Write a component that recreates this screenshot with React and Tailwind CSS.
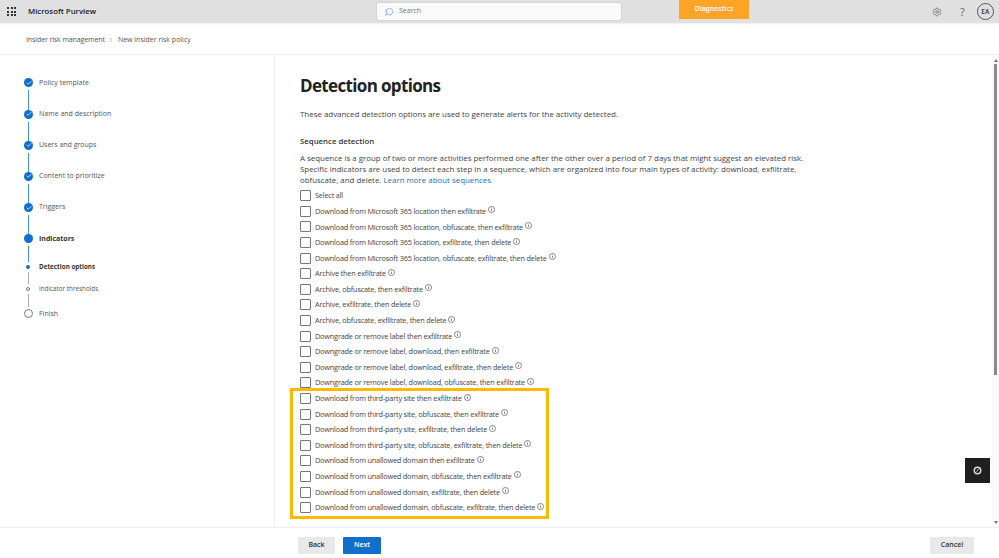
import { Check, ChevronRight, Search, Settings } from "lucide-react";

const steps = [
  { label: "Policy template", done: true },
  { label: "Name and description", done: true },
  { label: "Users and groups", done: true },
  { label: "Content to prioritize", done: true },
  { label: "Triggers", done: true },
];

const rows = [
  "Download from Microsoft 365 location then exfiltrate",
  "Download from Microsoft 365 location, obfuscate, then exfiltrate",
  "Download from Microsoft 365 location, exfiltrate, then delete",
  "Download from Microsoft 365 location, obfuscate, exfiltrate, then delete",
  "Archive then exfiltrate",
  "Archive, obfuscate, then exfiltrate",
  "Archive, exfiltrate, then delete",
  "Archive, obfuscate, exfiltrate, then delete",
  "Downgrade or remove label then exfiltrate",
  "Downgrade or remove label, download, then exfiltrate",
  "Downgrade or remove label, download, exfiltrate, then delete",
  "Downgrade or remove label, download, obfuscate, then exfiltrate",
  "Download from third-party site then exfiltrate",
  "Download from third-party site, obfuscate, then exfiltrate",
  "Download from third-party site, exfiltrate, then delete",
  "Download from third-party site, obfuscate, exfiltrate, then delete",
  "Download from unallowed domain then exfiltrate",
  "Download from unallowed domain, obfuscate, then exfiltrate",
  "Download from unallowed domain, exfiltrate, then delete",
  "Download from unallowed domain, obfuscate, exfiltrate, then delete",
];

function InfoIcon() {
  return (
    <svg width="7" height="7" viewBox="0 0 8 8" className="ml-[2px] -mt-[3px] shrink-0 text-[#444]" fill="none" stroke="currentColor" strokeWidth="0.7">
      <circle cx="4" cy="4" r="3.5" />
      <path d="M4 3.4v2.4M4 2v.8" />
    </svg>
  );
}

function CheckRow({ label, info = true }) {
  return (
    <div className="flex h-[15.6px] items-center">
      <div className="h-[11px] w-[11px] shrink-0 rounded-[1px] border border-[#777] bg-white" />
      <span className="ml-[4px] whitespace-nowrap text-[7.3px] tracking-[-0.18px] text-[#444]">{label}</span>
      {info && <InfoIcon />}
    </div>
  );
}

function Line({ h, color = "bg-[#3f94e4]" }) {
  return <div className={`ml-[28px] w-[1px] ${h} ${color}`} />;
}

export default function App() {
  return (
    <div className="flex h-[558px] w-[999px] flex-col overflow-hidden bg-white font-['Open_Sans','Noto_Sans',sans-serif] text-[#323130]">
      {/* top bar */}
      <header className="flex h-[23px] shrink-0 items-center bg-[#e0e0e0] shadow-[0_1px_2px_rgba(0,0,0,0.08)]">
        <div className="ml-[7px] grid w-[9px] grid-cols-3 gap-[1.5px]">
          {Array.from({ length: 9 }).map((_, i) => (
            <div key={i} className="h-[2px] w-[2px] bg-[#333]" />
          ))}
        </div>
        <span className="ml-[12px] w-[349px] text-[7.8px] font-semibold text-[#222]">Microsoft Purview</span>
        <div className="flex h-[17px] w-[244px] items-center rounded-[2px] bg-[#fafafa] pl-[7px] shadow-[0_0_2px_rgba(0,0,0,0.2)]">
          <Search size={10} strokeWidth={1.5} className="-scale-x-100 text-[#5b9bd5]" />
          <span className="ml-[5px] text-[7px] text-[#777]">Search</span>
        </div>
        <div className="ml-[58px] flex h-[19px] w-[70px] items-center justify-center self-start bg-[#ffa424] text-[7px] font-semibold text-white">
          Diagnostics
        </div>
        <Settings size={10} strokeWidth={2} className="ml-[183px] text-[#777]" />
        <span className="ml-[18px] text-[11px] leading-none text-[#666]">?</span>
        <div className="ml-[12px] flex h-[17px] w-[17px] items-center justify-center rounded-full border border-[#555] text-[6.5px] font-semibold text-[#333]">
          EA
        </div>
      </header>

      {/* breadcrumb */}
      <div className="flex h-[32px] shrink-0 items-center border-b border-[#eee] pl-[26px] pt-[3px] text-[7px] text-[#555]">
        <span className="tracking-[-0.1px]">Insider risk management</span>
        <ChevronRight size={8} strokeWidth={1.5} className="mx-[2px] text-[#888]" />
        <span className="ml-[1px]">New insider risk policy</span>
      </div>

      <div className="flex min-h-0 flex-1">
        {/* wizard steps */}
        <aside className="w-[275px] shrink-0 border-r border-[#eee] pt-[23.4px]">
          {steps.map((s) => (
            <div key={s.label}>
              <div className="flex h-[9px] items-center pl-[24px]">
                <div className="flex h-[9px] w-[9px] items-center justify-center rounded-full bg-[#0f6fd0]">
                  <Check size={6} strokeWidth={3} className="text-white" />
                </div>
                <span className="ml-[6px] text-[7px] text-[#555]">{s.label}</span>
              </div>
              <div className="h-[3px]" />
              <Line h="h-[19.2px]" />
            </div>
          ))}
          <div className="flex h-[9px] items-center pl-[24px]">
            <div className="h-[9px] w-[9px] rounded-full bg-[#0f6fd0]" />
            <span className="ml-[6px] text-[7px] font-bold text-[#333]">Indicators</span>
          </div>
          <div className="h-[3px]" />
          <Line h="h-[16px]" />
          <div className="mt-[2px] flex h-[5px] items-center pl-[26px]">
            <div className="h-[4px] w-[4px] rounded-full bg-[#0f6fd0]" />
            <span className="ml-[9px] text-[6.3px] font-bold text-[#333]">Detection options</span>
          </div>
          <div className="h-[3px]" />
          <Line h="h-[12px]" color="bg-[#aaa]" />
          <div className="mt-[2px] flex h-[5px] items-center pl-[26px]">
            <div className="h-[4px] w-[4px] rounded-full border border-[#777]" />
            <span className="ml-[9px] text-[6.3px] text-[#555]">Indicator thresholds</span>
          </div>
          <div className="h-[3px]" />
          <Line h="h-[13px]" color="bg-[#aaa]" />
          <div className="mt-[2px] flex h-[9px] items-center pl-[24px]">
            <div className="h-[9px] w-[9px] rounded-full border border-[#777]" />
            <span className="ml-[6px] text-[7px] text-[#555]">Finish</span>
          </div>
        </aside>

        {/* main content */}
        <main className="relative min-w-0 flex-1 pl-[25px]">
          <h1 className="mt-[20px] text-[17px] font-bold leading-[22px] tracking-[-0.65px] text-[#222]">Detection options</h1>
          <p className="mt-[11px] text-[8px] tracking-[-0.05px] leading-[12px] text-[#444]">
            These advanced detection options are used to generate alerts for the activity detected.
          </p>
          <h2 className="mt-[15px] text-[7.8px] font-semibold leading-[12px] text-[#333]">Sequence detection</h2>
          <p className="mt-[5.5px] w-[520px] text-[7.9px] leading-[11px] text-[#444]">
            A sequence is a group of two or more activities performed one after the other over a period of 7 days that might suggest an elevated risk.
            Specific indicators are used to detect each step in a sequence, which are organized into four main types of activity: download, exfiltrate,
            obfuscate, and delete. <span className="text-[#1a6fb5]">Learn more about sequences</span>
          </p>
          <div className="mt-[2.5px]">
            <CheckRow label="Select all" info={false} />
            {rows.map((r) => (
              <CheckRow key={r} label={r} />
            ))}
          </div>

          {/* highlight drawn over the last rows */}
          <div className="absolute left-[15px] top-[333px] h-[131px] w-[259px] border-[3px] border-[#fdb900]" />

          {/* floating button */}
          <div className="absolute right-[9px] top-[403px] flex h-[25px] w-[25px] items-center justify-center bg-[#1f1f1f]">
            <svg width="9" height="9" viewBox="0 0 10 10" fill="none" stroke="#ddd">
              <circle cx="5" cy="5" r="3.6" strokeWidth="1.6" />
              <path d="M4 6.2 6.6 3" strokeWidth="1" />
            </svg>
          </div>

          {/* scrollbar */}
          <div className="absolute bottom-0 right-0 top-0 flex w-[7px] flex-col items-center bg-[#fafafa]">
            <div className="mt-[4px] h-0 w-0 border-x-[2px] border-b-[3px] border-x-transparent border-b-[#777]" />
            <div className="mt-[2px] h-[311px] w-[3px] bg-[#8a8a8a]" />
            <div className="mb-[3px] mt-auto h-0 w-0 border-x-[2px] border-t-[3px] border-x-transparent border-t-[#777]" />
          </div>
        </main>
      </div>

      {/* footer */}
      <footer className="flex h-[31px] shrink-0 items-start border-t border-[#eee] pl-[298px] pr-[25px] pt-[9px]">
        <button className="h-[17px] w-[37px] rounded-[1px] bg-[#e8e8e8] text-[7px] font-semibold text-[#333]">Back</button>
        <button className="ml-[8px] h-[17px] w-[38px] rounded-[1px] bg-[#0f6fcb] text-[7px] font-semibold text-white">Next</button>
        <button className="ml-auto h-[17px] w-[44px] rounded-[1px] bg-[#e8e8e8] text-[7px] font-semibold text-[#333]">Cancel</button>
      </footer>
    </div>
  );
}
